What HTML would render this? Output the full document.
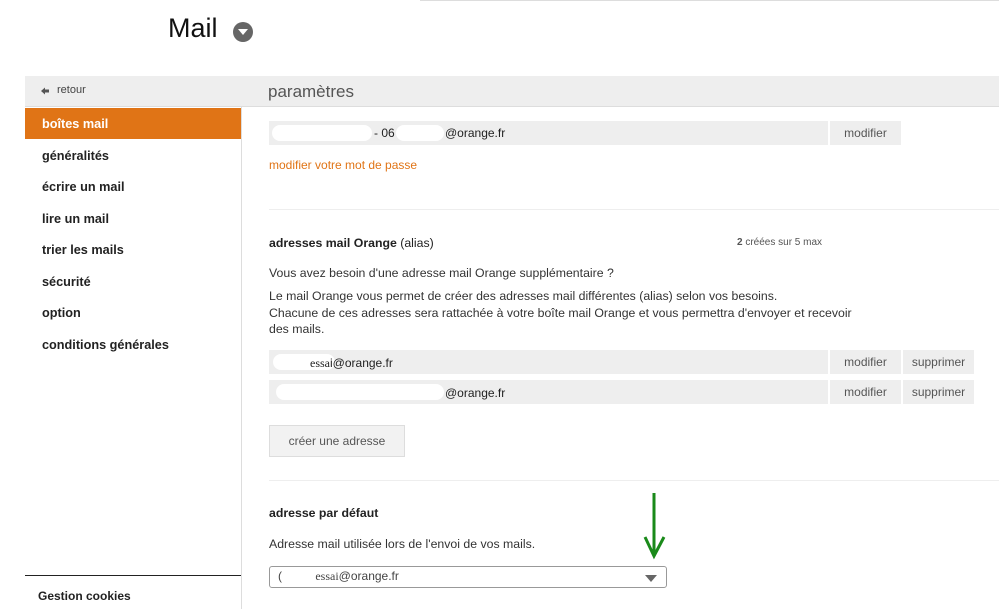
<!DOCTYPE html><html><head><meta charset="utf-8"><style>
*{margin:0;padding:0;box-sizing:border-box}
body{width:999px;height:609px;background:#fff;font-family:"Liberation Sans",Arial,sans-serif;position:relative;overflow:hidden;color:#222}
.a{position:absolute}
.nav{left:42px;font-size:12.7px;font-weight:bold;color:#222}
.row{background:#eee;height:24px}
.btn{background:#eee;height:24px;font-size:12px;color:#555;text-align:center;line-height:24px}
.blank{background:#fff;border-radius:8px;height:16px}
.t{font-size:12px;color:#333}
.d{font-size:12.3px;color:#333}
</style></head><body>
<div class="a" style="left:420px;top:0;width:579px;height:1px;background:#ddd"></div>
<div class="a" style="left:168px;top:13px;font-size:27px;color:#111">Mail</div>
<div class="a" style="left:233px;top:22px;width:20px;height:20px;border-radius:50%;background:#666"></div>
<div class="a" style="left:238px;top:29px;width:0;height:0;border-left:5px solid transparent;border-right:5px solid transparent;border-top:6px solid #fff"></div>
<div class="a" style="left:25px;top:76px;width:974px;height:31px;background:#eee;border-bottom:1px solid #ddd"></div>
<svg class="a" style="left:40px;top:86px" width="10" height="10"><path d="M1 5 L5 1.5 L5 3.5 L9 3.5 L9 6.5 L5 6.5 L5 8.5 Z" fill="#555"/></svg>
<div class="a" style="left:57px;top:84px;font-size:11px;color:#444">retour</div>
<div class="a" style="left:268px;top:82px;font-size:17px;color:#555">paramètres</div>
<div class="a" style="left:241px;top:107px;width:1px;height:502px;background:#ddd"></div>
<div class="a" style="left:25px;top:108px;width:216px;height:31px;background:#e07416"></div>
<div class="a nav" style="top:117px;color:#fff">boîtes mail</div>
<div class="a nav" style="top:149px">généralités</div>
<div class="a nav" style="top:180px">écrire un mail</div>
<div class="a nav" style="top:212px">lire un mail</div>
<div class="a nav" style="top:243px">trier les mails</div>
<div class="a nav" style="top:275px">sécurité</div>
<div class="a nav" style="top:306px">option</div>
<div class="a nav" style="top:338px">conditions générales</div>
<div class="a" style="left:25px;top:575px;width:216px;height:1px;background:#222"></div>
<div class="a nav" style="left:38px;top:589px;font-size:12px">Gestion cookies</div>

<div class="a row" style="left:269px;top:121px;width:559px"></div>
<div class="a blank" style="left:272px;top:125px;width:100px"></div>
<div class="a t" style="left:374px;top:126px;color:#222">- 06</div>
<div class="a blank" style="left:396px;top:125px;width:48px"></div>
<div class="a t" style="left:445px;top:126px;color:#222">@orange.fr</div>
<div class="a btn" style="left:830px;top:121px;width:71px">modifier</div>
<div class="a" style="left:269px;top:158px;font-size:12px;color:#e07416">modifier votre mot de passe</div>
<div class="a" style="left:269px;top:209px;width:730px;height:1px;background:#eee"></div>
<div class="a" style="left:269px;top:236px;font-size:12.3px;color:#222"><b>adresses mail Orange</b> (alias)</div>
<div class="a" style="left:737px;top:237px;font-size:10px;color:#555"><b>2</b> créées sur 5 max</div>
<div class="a d" style="left:269px;top:266px">Vous avez besoin d'une adresse mail Orange supplémentaire ?</div>
<div class="a d" style="left:269px;top:288px;line-height:16.5px">Le mail Orange vous permet de créer des adresses mail différentes (alias) selon vos besoins.<br>Chacune de ces adresses sera rattachée à votre boîte mail Orange et vous permettra d'envoyer et recevoir<br>des mails.</div>
<div class="a row" style="left:269px;top:350px;width:559px"></div>
<div class="a blank" style="left:273px;top:354px;width:62px"></div>
<div class="a t" style="left:310px;top:356px;color:#222;font-family:'Liberation Serif',serif">essa<span style="font-family:'Liberation Sans'">i@orange.fr</span></div>
<div class="a btn" style="left:830px;top:350px;width:71px">modifier</div>
<div class="a btn" style="left:903px;top:350px;width:71px">supprimer</div>
<div class="a row" style="left:269px;top:380px;width:559px"></div>
<div class="a blank" style="left:276px;top:384px;width:168px"></div>
<div class="a t" style="left:445px;top:386px;color:#222">@orange.fr</div>
<div class="a btn" style="left:830px;top:380px;width:71px">modifier</div>
<div class="a btn" style="left:903px;top:380px;width:71px">supprimer</div>
<div class="a" style="left:269px;top:425px;width:136px;height:32px;background:#f2f2f2;border:1px solid #ddd;font-size:12px;color:#555;text-align:center;line-height:30px">créer une adresse</div>
<div class="a" style="left:269px;top:480px;width:730px;height:1px;background:#eee"></div>
<div class="a" style="left:269px;top:506px;font-size:12.3px;font-weight:bold;color:#222">adresse par défaut</div>
<div class="a d" style="left:269px;top:537px">Adresse mail utilisée lors de l'envoi de vos mails.</div>
<div class="a" style="left:269px;top:566px;width:398px;height:22px;border:1px solid #999;border-radius:3px;background:#fff"></div>
<div class="a t" style="left:278px;top:569px;color:#444">(&nbsp;&nbsp;&nbsp;&nbsp;&nbsp;&nbsp;&nbsp;&nbsp;&nbsp;&nbsp;<span style="font-family:'Liberation Serif',serif">essai</span>@orange.fr</div>
<div class="a" style="left:645px;top:575px;width:0;height:0;border-left:6px solid transparent;border-right:6px solid transparent;border-top:7px solid #666"></div>
<svg class="a" style="left:640px;top:490px" width="30" height="72"><path d="M14 3 L14 28 M14 28 L14 64 M5 47 L14 66 L24 47" stroke="#1a8a1a" stroke-width="3" fill="none"/></svg>
</body></html>
